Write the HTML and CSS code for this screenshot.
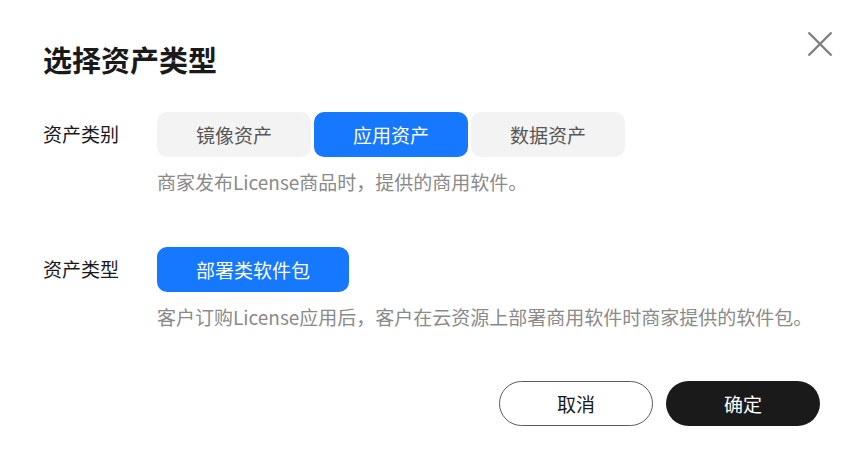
FILE: index.html
```html
<!DOCTYPE html>
<html lang="zh-CN">
<head>
    <meta charset="UTF-8">
    <meta name="viewport" content="width=device-width, initial-scale=1.0">
    <title>选择资产类型</title>
    <link rel="stylesheet" href="styles.css">
</head>
<body>
    <div class="dialog">
        <div class="dialog-header">
            <h2 class="dialog-title">选择资产类型</h2>
            <button class="close-btn" aria-label="关闭">
                <svg width="26" height="26" viewBox="0 0 26 26">
                    <path d="M1.5 1.5 L24.5 24.5 M24.5 1.5 L1.5 24.5" stroke="#808080" stroke-width="2.4" fill="none"/>
                </svg>
            </button>
        </div>

        <div class="form-row">
            <div class="form-label">资产类别</div>
            <div class="form-field">
                <div class="segmented">
                    <button class="seg-item">镜像资产</button>
                    <button class="seg-item active">应用资产</button>
                    <button class="seg-item">数据资产</button>
                </div>
                <p class="field-desc">商家发布License商品时，提供的商用软件。</p>
            </div>
        </div>

        <div class="form-row second">
            <div class="form-label">资产类型</div>
            <div class="form-field">
                <button class="type-item active">部署类软件包</button>
                <p class="field-desc">客户订购License应用后，客户在云资源上部署商用软件时商家提供的软件包。</p>
            </div>
        </div>

        <div class="dialog-footer">
            <button class="btn btn-cancel">取消</button>
            <button class="btn btn-ok">确定</button>
        </div>
    </div>
</body>
</html>
```

FILE: styles.css
```css
* {
    box-sizing: border-box;
}
body {
    margin: 0;
    padding: 0;
    background: #fff;
    font-family: "Noto Sans CJK SC", "Noto Sans", sans-serif;
    color: #1a1a1a;
}
button {
    font-family: inherit;
    cursor: pointer;
}
.dialog {
    width: 850px;
    height: 467px;
    padding: 31px 17px 0 43px;
}
.dialog-header {
    display: flex;
    justify-content: space-between;
    align-items: flex-start;
}
.dialog-title {
    margin: 13px 0 0;
    font-size: 29px;
    line-height: 30px;
    font-weight: 700;
    color: #1a1a1a;
}
.close-btn {
    border: none;
    background: none;
    padding: 0;
    width: 26px;
    height: 26px;
}
.close-btn svg {
    display: block;
}
.form-row {
    display: flex;
    margin-top: 38px;
}
.form-row.second {
    margin-top: 52px;
}
.form-label {
    width: 114px;
    flex-shrink: 0;
    font-size: 19px;
    line-height: 43px;
    color: #1a1a1a;
}
.segmented {
    display: flex;
    gap: 3px;
}
.seg-item,
.type-item {
    height: 45px;
    border: none;
    border-radius: 10px;
    font-size: 19px;
    background: #f3f3f3;
    color: #575757;
    padding: 0;
}
.seg-item {
    width: 154px;
}
.type-item {
    width: 192px;
}
.seg-item.active,
.type-item.active {
    background: #1677ff;
    color: #fff;
}
.field-desc {
    margin: 12px 0 0;
    font-size: 19px;
    line-height: 26px;
    color: #8a8a8a;
}
.dialog-footer {
    display: flex;
    justify-content: flex-end;
    gap: 13px;
    margin-top: 51px;
    margin-right: 13px;
}
.btn {
    width: 154px;
    height: 45px;
    border-radius: 23px;
    font-size: 19px;
    padding: 0;
}
.btn-cancel {
    background: #fff;
    border: 1px solid #5c5c5c;
    color: #1a1a1a;
}
.btn-ok {
    background: #1a1a1a;
    border: none;
    color: #fff;
}
```
